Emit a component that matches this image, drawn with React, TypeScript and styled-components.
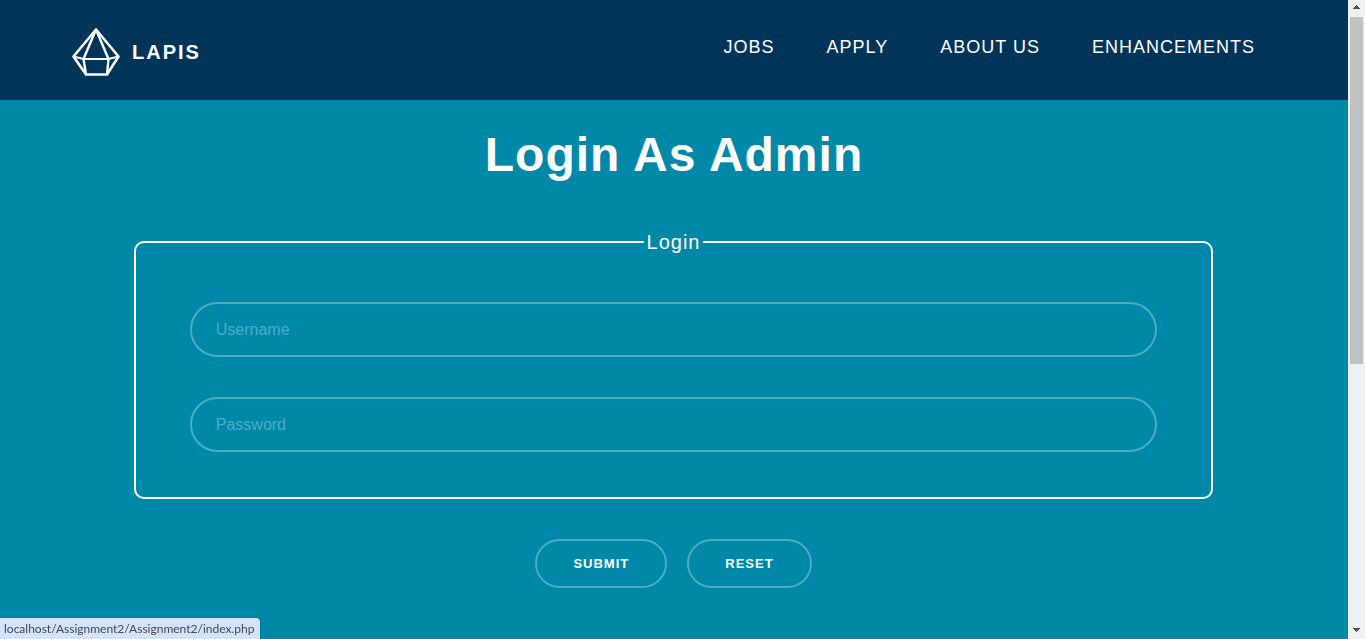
import React from "react";
import styled, { createGlobalStyle } from "styled-components";

const GlobalStyle = createGlobalStyle`
  *, *::before, *::after { box-sizing: border-box; }
  body {
    margin: 0;
    background: #0088a9;
    color: #fff;
    font-family: Arial, "Liberation Sans", sans-serif;
  }
`;

const Screen = styled.div`
  display: flex;
  height: 100vh;
  overflow: hidden;
`;

const Page = styled.div`
  flex: 1;
  min-width: 0;
`;

const Header = styled.header`
  display: flex;
  justify-content: space-between;
  align-items: flex-start;
  height: 100px;
  padding: 28px 93px 0 72px;
  background: #003559;
`;

const Brand = styled.a`
  display: flex;
  align-items: center;
  gap: 12px;
  color: #fff;
  font-size: 20px;
  font-weight: 700;
  letter-spacing: 2px;
  text-decoration: none;
`;

const Nav = styled.nav`
  display: flex;
  gap: 52px;
  padding-top: 9px;
`;

const NavLink = styled.a`
  color: #fff;
  font-size: 18px;
  line-height: 20px;
  letter-spacing: 1px;
  text-decoration: none;
  text-transform: uppercase;
`;

const Title = styled.h1`
  margin: 27px 0 47px;
  font-size: 48px;
  line-height: 56px;
  letter-spacing: 1px;
  text-align: center;
`;

const Form = styled.form`
  padding: 0 135px 0 134px;
`;

const Group = styled.fieldset`
  display: flex;
  flex-direction: column;
  align-items: center;
  gap: 40px;
  margin: 0;
  padding: 48px 0 45px;
  border: 2px solid #fff;
  border-radius: 10px;
`;

const Legend = styled.legend`
  margin: 0 auto;
  padding: 0 3px;
  font-size: 20px;
  line-height: 24px;
  letter-spacing: 1px;
`;

const Field = styled.input`
  width: 90%;
  height: 55px;
  padding: 0 24px;
  border: 2px solid #4dacc3;
  border-radius: 28px;
  background: transparent;
  color: #fff;
  font: 16px Arial, "Liberation Sans", sans-serif;

  &::placeholder {
    color: #4dacc3;
    opacity: 1;
  }
`;

const Actions = styled.div`
  display: flex;
  justify-content: center;
  gap: 20px;
  margin-top: 40px;
`;

const Button = styled.button`
  height: 49px;
  padding: 0 36px;
  border: 2px solid #4dacc3;
  border-radius: 25px;
  background: transparent;
  color: #fff;
  font: 700 13px Arial, "Liberation Sans", sans-serif;
  letter-spacing: 1px;
  text-transform: uppercase;
`;

const ScrollTrack = styled.div`
  display: flex;
  flex-direction: column;
  align-items: center;
  flex: 0 0 17px;
  background: #f0f0f0;
`;

const ScrollArrow = styled.svg`
  flex: none;
  width: 17px;
  height: 17px;
  fill: #505050;
`;

const ScrollLane = styled.div`
  flex: 1;
  width: 13px;
`;

const ScrollThumb = styled.div`
  height: 57.4%;
  background: #c1c1c1;
`;

const StatusBar = styled.div`
  position: fixed;
  bottom: 0;
  left: 0;
  height: 21px;
  padding: 0 6px 0 4px;
  border-top-right-radius: 4px;
  background: #d3e3fd;
  box-shadow: 0 0 2px rgba(0, 0, 0, 0.35);
  color: #474747;
  font: 12px/22px "Segoe UI", Lato, sans-serif;
`;

function Gem() {
  return (
    <svg width="48" height="48" viewBox="0 0 48 48" fill="none" stroke="#fff" strokeWidth="2.6" strokeLinejoin="round" aria-hidden="true">
      <path d="M24 1.5 1.5 28.5 14 46.5h21l11.5-18z" />
      <path d="M24 1.5 11.5 31 14 46.5M24 1.5 36.5 31 35 46.5" strokeWidth="2.4" />
      <path d="M1.5 28.5 11.5 31h25l10-2.5" strokeWidth="2" />
    </svg>
  );
}

const links = ["Jobs", "Apply", "About Us", "Enhancements"];

export default function App() {
  return (
    <>
      <GlobalStyle />
      <Screen>
        <Page>
          <Header>
            <Brand href="#">
              <Gem />
              LAPIS
            </Brand>
            <Nav>
              {links.map((label) => (
                <NavLink key={label} href="#">{label}</NavLink>
              ))}
            </Nav>
          </Header>
          <main>
            <Title>Login As Admin</Title>
            <Form onSubmit={(event) => event.preventDefault()}>
              <Group>
                <Legend>Login</Legend>
                <Field type="text" name="username" placeholder="Username" aria-label="Username" />
                <Field type="password" name="password" placeholder="Password" aria-label="Password" />
              </Group>
              <Actions>
                <Button type="submit">Submit</Button>
                <Button type="reset">Reset</Button>
              </Actions>
            </Form>
          </main>
        </Page>
        <ScrollTrack aria-hidden="true">
          <ScrollArrow viewBox="0 0 17 17"><path d="M8 5h1v1h1v1h1v1h1v1H5V8h1V7h1V6h1z" /></ScrollArrow>
          <ScrollLane><ScrollThumb /></ScrollLane>
          <ScrollArrow viewBox="0 0 17 17"><path d="M5 6h7v1h-1v1h-1v1H9v1H8V9H7V8H6V7H5z" /></ScrollArrow>
        </ScrollTrack>
      </Screen>
      <StatusBar>localhost/Assignment2/Assignment2/index.php</StatusBar>
    </>
  );
}
